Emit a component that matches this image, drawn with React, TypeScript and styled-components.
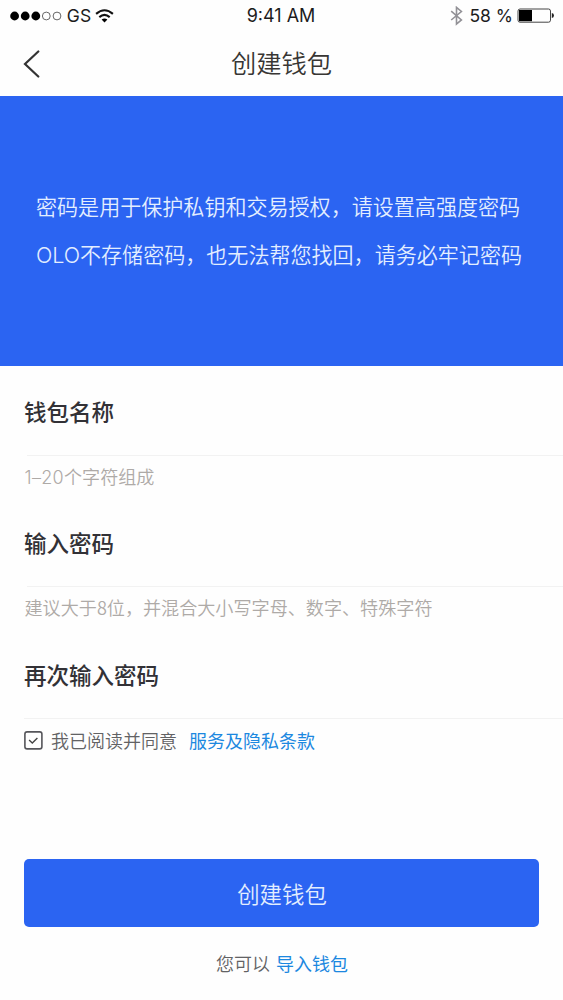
import React from "react";
import styled, { createGlobalStyle } from "styled-components";

const GlobalStyle = createGlobalStyle`
  * { box-sizing: border-box; }
  body {
    margin: 0;
    background: #fefefe;
    font-family: "Noto Sans CJK SC", sans-serif;
  }
`;

const Screen = styled.div`
  display: flex;
  flex-direction: column;
  width: 563px;
  height: 1000px;
  overflow: hidden;
  background: #fefefe;
`;

const StatusBar = styled.div`
  display: grid;
  grid-template-columns: 1fr auto 1fr;
  align-items: center;
  height: 32px;
  padding: 0 8px 0 10px;
  font-family: Inter, "Liberation Sans", sans-serif;
  font-size: 17.5px;
  line-height: 32px;
  color: #1c1c1c;
`;

const StatusGroup = styled.div<{ $end?: boolean }>`
  display: flex;
  align-items: center;
  justify-content: ${(p) => (p.$end ? "flex-end" : "flex-start")};
`;

const StatusText = styled.span<{ $width: number; $end?: boolean }>`
  display: flex;
  justify-content: ${(p) => (p.$end ? "flex-end" : "center")};
  width: ${(p) => p.$width}px;
  padding-right: ${(p) => (p.$end ? 4 : 0)}px;
  white-space: nowrap;
`;

const Clock = styled.span`
  margin-right: 3px;
  font-size: 18px;
`;

const NavBar = styled.header`
  display: grid;
  grid-template-columns: 60px 1fr 60px;
  align-items: center;
  height: 63.5px;
`;

const BackButton = styled.button`
  display: flex;
  width: 60px;
  height: 63.5px;
  padding: 18px 0 0 23px;
  border: 0;
  background: none;
`;

const Title = styled.h1`
  margin: 0;
  padding-bottom: 3px;
  text-align: center;
  font-size: 25.3px;
  font-weight: 350;
  line-height: 60px;
  color: #383634;
`;

const Banner = styled.section`
  display: flex;
  flex-direction: column;
  height: 270px;
  padding: 86.5px 0 0 36px;
  background: #2b64f2;
  color: #e3eeff;
  font-size: 21.05px;
  font-weight: 350;
  line-height: 48px;
  white-space: nowrap;
`;

const BannerLine = styled.p`
  margin: 0;
`;

const Latin = styled.span`
  display: inline-block;
  width: 44px;
  font-family: Inter, sans-serif;
  font-size: 21.5px;
  font-weight: 300;
  letter-spacing: 0;
  line-height: 1;
`;

const Form = styled.form`
  display: flex;
  flex-direction: column;
  height: 493.5px;
`;

const Field = styled.div<{ $height: number }>`
  display: flex;
  flex-direction: column;
  height: ${(p) => p.$height}px;
  padding-left: 24px;
`;

const Label = styled.label`
  height: 89px;
  padding-top: 26px;
  font-size: 22.5px;
  font-weight: 500;
  line-height: 38px;
  color: #323136;
`;

const Divider = styled.div<{ $inset?: number }>`
  height: 1px;
  margin-left: ${(p) => p.$inset ?? 0}px;
  background: #f2f2f2;
`;

const Hint = styled.p`
  margin: 0;
  padding-left: 0.5px;
  font-size: 18.1px;
  font-weight: 350;
  line-height: 40px;
  color: #aeaaa7;
`;

const Digits = styled.span`
  font-family: Inter, sans-serif;
  font-size: 18px;
  font-weight: 300;
  letter-spacing: 0.3px;
  line-height: 1;
`;

const Agreement = styled.div`
  display: flex;
  align-items: center;
  height: 42px;
  padding-left: 23.5px;
  font-size: 18px;
  font-weight: 350;
  line-height: 42px;
  color: #626264;
`;

const AgreementText = styled.span`
  margin: 0 12px 0 8.5px;
`;

const Link = styled.a`
  color: #1c88e0;
  font-weight: 400;
`;

const SubmitButton = styled.button`
  height: 68px;
  margin: 0 24px;
  padding: 0 0 0 1px;
  border: 0;
  border-radius: 5px;
  background: #2b64f2;
  color: #e3eeff;
  font-family: inherit;
  font-size: 22.4px;
  font-weight: 350;
`;

const Footer = styled.footer`
  display: flex;
  justify-content: center;
  gap: 6px;
  padding: 17px 0 0 1px;
  font-size: 18px;
  font-weight: 350;
  line-height: 38px;
  color: #626264;
`;

const SignalIcon = () => (
  <svg width="53" height="12" viewBox="0 0 53 12">
    {[4.6, 15.2, 25.8].map((x) => (
      <circle key={x} cx={x} cy="6" r="4.4" fill="#000" />
    ))}
    {[36.3, 47].map((x) => (
      <circle key={x} cx={x} cy="6" r="3.9" fill="none" stroke="#555" strokeWidth="0.9" />
    ))}
  </svg>
);

const WifiIcon = () => (
  <svg width="19" height="14" viewBox="0 0 19 14">
    <g fill="none" stroke="#111" strokeWidth="2.1">
      <path d="M1.1 4.9Q9.5 -2.4 17.9 4.9" />
      <path d="M4.3 8.1Q9.5 3.6 14.7 8.1" />
    </g>
    <path d="M6.6 10.6Q9.5 8.2 12.4 10.6L9.5 13.4Z" fill="#000" />
  </svg>
);

const BluetoothIcon = () => (
  <svg width="13" height="20" viewBox="0 0 13 20">
    <path
      d="M1.2 5.2L11.4 13.9L6.5 18V1.4L11.4 5.5L1.2 14"
      fill="none"
      stroke="#929196"
      strokeWidth="1.6"
    />
  </svg>
);

const BatteryIcon = () => (
  <svg width="38" height="16" viewBox="0 0 38 16">
    <rect x="1" y="1" width="32.5" height="13.2" rx="2" fill="none" stroke="#444" strokeWidth="1" />
    <path d="M2 2H15V13.2H2Z" fill="#000" />
    <path d="M34.8 5.1Q37 5.5 37 7.6Q37 9.7 34.8 10.1Z" fill="#222" />
  </svg>
);

const BackIcon = () => (
  <svg width="18" height="28" viewBox="0 0 18 28">
    <path d="M15.3 1.5L2 14L15.3 26.5" fill="none" stroke="#333" strokeWidth="2.2" strokeLinecap="round" />
  </svg>
);

const CheckIcon = () => (
  <svg width="19" height="19" viewBox="0 0 19 19">
    <rect x="0.9" y="0.9" width="17" height="17" rx="2.2" fill="none" stroke="#55555a" strokeWidth="1.6" />
    <path d="M5.1 9L8.3 12L13.4 7.1" fill="none" stroke="#444" strokeWidth="1.4" />
  </svg>
);

export default function App() {
  return (
    <Screen>
      <GlobalStyle />
      <StatusBar>
        <StatusGroup>
          <SignalIcon />
          <StatusText $width={32}>GS</StatusText>
          <WifiIcon />
        </StatusGroup>
        <Clock>9:41 AM</Clock>
        <StatusGroup $end>
          <BluetoothIcon />
          <StatusText $width={54} $end>58 %</StatusText>
          <BatteryIcon />
        </StatusGroup>
      </StatusBar>
      <NavBar>
        <BackButton type="button" aria-label="返回">
          <BackIcon />
        </BackButton>
        <Title>创建钱包</Title>
      </NavBar>
      <Banner>
        <BannerLine>密码是用于保护私钥和交易授权，请设置高强度密码</BannerLine>
        <BannerLine>
          <Latin>OLO</Latin>不存储密码，也无法帮您找回，请务必牢记密码
        </BannerLine>
      </Banner>
      <Form>
        <Field $height={131.5}>
          <Label>钱包名称</Label>
          <Divider $inset={3} />
          <Hint>
            <Digits>1–20</Digits>个字符组成
          </Hint>
        </Field>
        <Field $height={132}>
          <Label>输入密码</Label>
          <Divider $inset={3} />
          <Hint>建议大于8位，并混合大小写字母、数字、特殊字符</Hint>
        </Field>
        <Field $height={90}>
          <Label>再次输入密码</Label>
          <Divider />
        </Field>
        <Agreement>
          <CheckIcon />
          <AgreementText>我已阅读并同意</AgreementText>
          <Link>服务及隐私条款</Link>
        </Agreement>
      </Form>
      <SubmitButton type="button">创建钱包</SubmitButton>
      <Footer>
        <span>您可以</span>
        <Link>导入钱包</Link>
      </Footer>
    </Screen>
  );
}
